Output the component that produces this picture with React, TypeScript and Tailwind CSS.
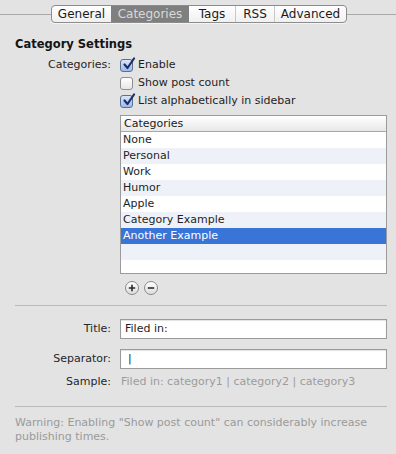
import React from 'react';

const font = { fontFamily: '"Lucida Grande", "DejaVu Sans", sans-serif' };

const tabs = ['General', 'Categories', 'Tags', 'RSS', 'Advanced'];
const rows = ['None', 'Personal', 'Work', 'Humor', 'Apple', 'Category Example', 'Another Example', '', ''];

const Check: React.FC<{ checked?: boolean }> = ({ checked }) => (
  <span
    className={`relative inline-block w-[13px] h-[13px] rounded-[3px] border shrink-0 ${
      checked ? 'border-[#5a6f96] bg-gradient-to-b from-[#dbe6f7] to-[#9fbbe6]' : 'border-[#8e8e8e] bg-gradient-to-b from-white to-[#e6e6e6]'
    }`}
  >
    {checked && (
      <svg viewBox="0 0 14 14" className="absolute left-[1px] -top-[3px] w-[14px] h-[14px]">
        <path d="M2.5 7.5 L5.5 11 L12 1.5" fill="none" stroke="#1c2f6e" strokeWidth="2.2" strokeLinecap="round" strokeLinejoin="round" />
      </svg>
    )}
  </span>
);

const Label: React.FC<{ children: React.ReactNode }> = ({ children }) => (
  <div className="w-[97px] shrink-0 text-right pr-[1px] text-[#262626]">{children}</div>
);

export default function App() {
  return (
    <div className="w-[396px] h-[454px] bg-[#e3e3e3] text-[11px] text-[#1e1e1e] overflow-hidden" style={font}>
      {/* tab bar */}
      <div className="flex items-center pt-[5px]">
        <div className="w-[51px] h-px bg-[#a9a9a9]" />
        <div className="flex h-[18px] rounded-[4px] border border-[#8c8c8c] bg-gradient-to-b from-white to-[#f0f0f0] overflow-hidden shadow-[0_1px_0_rgba(255,255,255,0.6)]">
          {tabs.map((t, i) => (
            <div
              key={t}
              className={`flex items-center justify-center h-full text-[12px] ${
                t === 'Categories' ? 'bg-[#7f7f7f] text-[#d9d9d9]' : 'text-[#1a1a1a]'
              } ${i > 0 && t !== 'Categories' && tabs[i - 1] !== 'Categories' ? 'border-l border-[#c8c8c8]' : ''} ${
                ['w-[59px]', 'w-[78px]', 'w-[46px]', 'w-[39px]', 'w-[72px]'][i]
              }`}
            >
              {t}
            </div>
          ))}
        </div>
        <div className="flex-1 h-px bg-[#a9a9a9]" />
      </div>

      <div className="pl-[15px] pr-[9px]">
        <div className="mt-[13px] font-bold text-[11.5px] text-[#141414]">Category Settings</div>

        {/* checkboxes */}
        <div className="flex mt-[3px]">
          <Label>
            <div className="h-[18px] leading-[18px]">Categories:</div>
          </Label>
          <div className="ml-[8px] flex flex-col">
            <div className="flex items-center gap-[5px] h-[18px]"><Check checked />Enable</div>
            <div className="flex items-center gap-[5px] h-[18px]"><Check />Show post count</div>
            <div className="flex items-center gap-[5px] h-[18px]"><Check checked />List alphabetically in sidebar</div>
          </div>
        </div>

        {/* list */}
        <div className="ml-[105px] mt-[5px] h-[159px] border border-[#9b9b9b] bg-white overflow-hidden">
          <div className="h-[16px] leading-[15px] px-[3px] border-b border-[#a8a8a8] bg-gradient-to-b from-white to-[#e8e8e8] text-[#1a1a1a]">
            Categories
          </div>
          {rows.map((r, i) => (
            <div
              key={i}
              className={`h-[16px] leading-[16px] px-[2px] ${
                r === 'Another Example' ? 'bg-[#3875d7] text-white' : i % 2 === 1 ? 'bg-[#eef2f8]' : 'bg-white'
              }`}
            >
              {r}
            </div>
          ))}
        </div>

        {/* add/remove */}
        <div className="ml-[110px] mt-[7px] flex gap-[5px]">
          {['+', '-'].map((s) => (
            <div key={s} className="w-[14px] h-[14px] rounded-full border border-[#8a8a8a] bg-gradient-to-b from-white to-[#dcdcdc] flex items-center justify-center">
              <svg viewBox="0 0 10 10" className="w-[8px] h-[8px]">
                <path d={s === '+' ? 'M1 5 H9 M5 1 V9' : 'M1 5 H9'} stroke="#2b2b2b" strokeWidth="2" />
              </svg>
            </div>
          ))}
        </div>

        <div className="mt-[10px] h-px bg-[#b9b9b9]" />

        {/* fields */}
        <div className="flex items-center mt-[13px]">
          <Label>Title:</Label>
          <div className="ml-[8px] flex-1 h-[20px] border border-[#9a9a9a] bg-white px-[4px] leading-[18px] shadow-[inset_0_1px_1px_rgba(0,0,0,0.12)]">Filed in:</div>
        </div>
        <div className="flex items-center mt-[10px]">
          <Label>Separator:</Label>
          <div className="ml-[8px] flex-1 h-[20px] border border-[#9a9a9a] bg-white px-[7px] leading-[18px] shadow-[inset_0_1px_1px_rgba(0,0,0,0.12)]">|</div>
        </div>
        <div className="flex items-center mt-[5px] h-[16px]">
          <Label>Sample:</Label>
          <div className="ml-[9px] text-[#9c9c9c]">Filed in: category1 | category2 | category3</div>
        </div>

        <div className="mt-[16px] h-px bg-[#b9b9b9]" />

        <div className="mt-[9px] text-[#9a9a9a] leading-[14px]">
          Warning: Enabling "Show post count" can considerably increase publishing times.
        </div>
      </div>
    </div>
  );
}
